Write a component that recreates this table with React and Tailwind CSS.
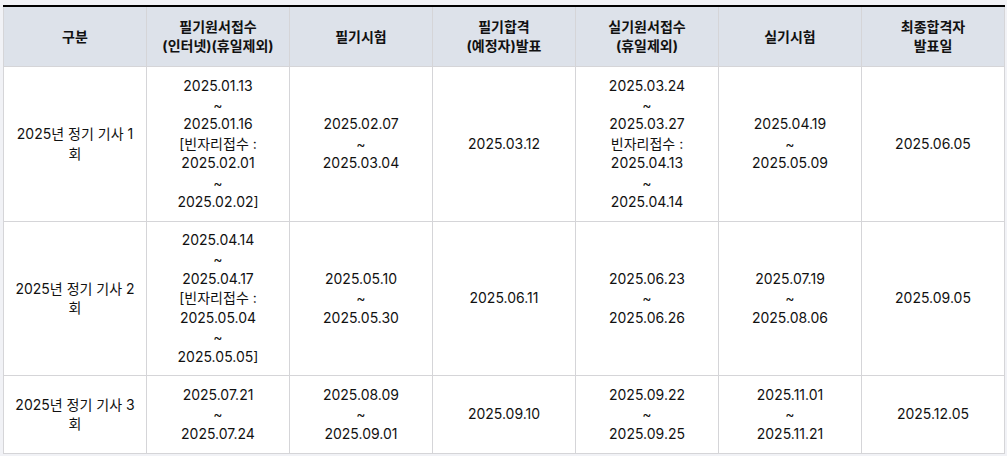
import React from "react";

const headers = [
  ["구분"],
  ["필기원서접수", "(인터넷)(휴일제외)"],
  ["필기시험"],
  ["필기합격", "(예정자)발표"],
  ["실기원서접수", "(휴일제외)"],
  ["실기시험"],
  ["최종합격자", "발표일"],
];

const rows = [
  {
    h: "h-[155px]",
    cells: [
      ["2025년 정기 기사 1 회"],
      ["2025.01.13", "~", "2025.01.16", "[빈자리접수 :", "2025.02.01", "~", "2025.02.02]"],
      ["2025.02.07", "~", "2025.03.04"],
      ["2025.03.12"],
      ["2025.03.24", "~", "2025.03.27", "빈자리접수 :", "2025.04.13", "~", "2025.04.14"],
      ["2025.04.19", "~", "2025.05.09"],
      ["2025.06.05"],
    ],
  },
  {
    h: "h-[154px]",
    cells: [
      ["2025년 정기 기사 2 회"],
      ["2025.04.14", "~", "2025.04.17", "[빈자리접수 :", "2025.05.04", "~", "2025.05.05]"],
      ["2025.05.10", "~", "2025.05.30"],
      ["2025.06.11"],
      ["2025.06.23", "~", "2025.06.26"],
      ["2025.07.19", "~", "2025.08.06"],
      ["2025.09.05"],
    ],
  },
  {
    h: "h-[78px]",
    cells: [
      ["2025년 정기 기사 3 회"],
      ["2025.07.21", "~", "2025.07.24"],
      ["2025.08.09", "~", "2025.09.01"],
      ["2025.09.10"],
      ["2025.09.22", "~", "2025.09.25"],
      ["2025.11.01", "~", "2025.11.21"],
      ["2025.12.05"],
    ],
  },
];

export default function App() {
  return (
    <div
      className="w-[1007px] h-[456px] bg-[#f1f2f6] pt-[5px] px-[3px] overflow-hidden"
      style={{ fontFamily: 'Inter, "Noto Sans CJK KR", sans-serif' }}
    >
      <table className="w-[1001px] table-fixed border-collapse border-t-2 border-t-black bg-white text-[14px] leading-[19.4px] text-[#111]">
        <colgroup>
          {headers.map((_, i) => (
            <col key={i} className="w-[143px]" />
          ))}
        </colgroup>
        <thead>
          <tr className="bg-[#dde2ea] h-[60px]">
            {headers.map((h, i) => (
              <th
                key={i}
                className="border border-[#d5d5d8] border-t-0 px-[10px] py-[8px] font-bold text-center align-middle"
              >
                {h.map((l, j) => (
                  <div key={j}>{l}</div>
                ))}
              </th>
            ))}
          </tr>
        </thead>
        <tbody>
          {rows.map((r, ri) => (
            <tr key={ri} className={r.h}>
              {r.cells.map((c, ci) => (
                <td
                  key={ci}
                  className="border border-[#d5d5d8] px-[10px] py-[8px] text-center align-middle"
                >
                  {c.map((l, j) => (
                    <div key={j}>{l}</div>
                  ))}
                </td>
              ))}
            </tr>
          ))}
        </tbody>
      </table>
    </div>
  );
}
